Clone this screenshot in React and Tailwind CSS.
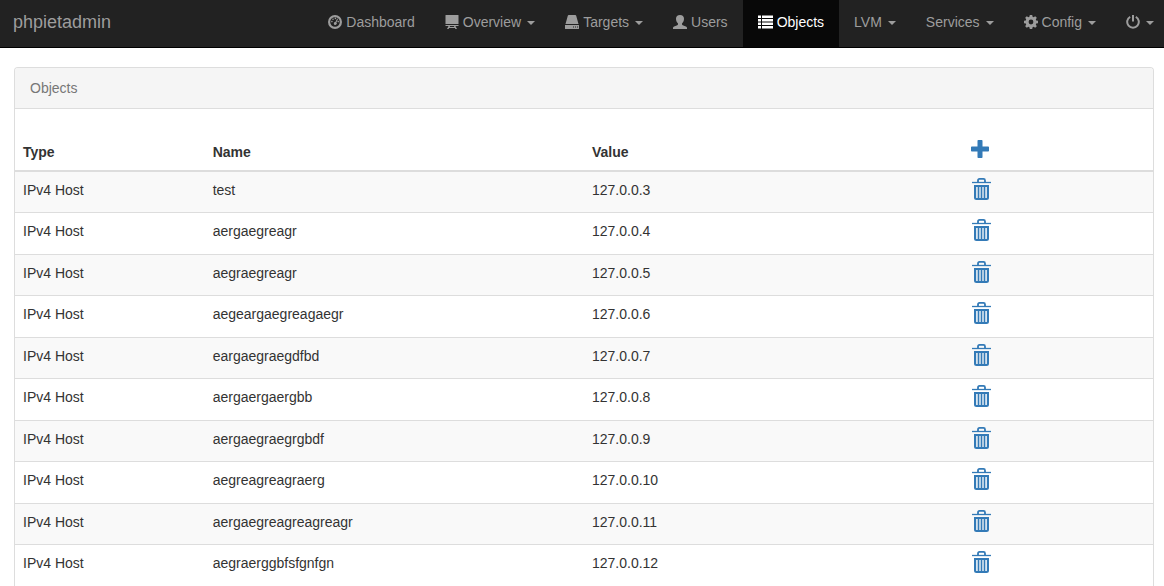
import React from 'react';

function DashboardIcon() {
  return (
    <svg viewBox="0 0 14 14" className="size-[14px] shrink-0" fill="currentColor" aria-hidden="true">
      <circle cx="7" cy="7" r="5.9" fill="none" stroke="currentColor" strokeWidth="2.2" />
      <circle cx="3.9" cy="6.6" r="0.8" />
      <circle cx="5" cy="4.2" r="0.8" />
      <circle cx="7.4" cy="3.4" r="0.8" />
      <circle cx="10.2" cy="6.6" r="0.8" />
      <path d="M9.2 3.4l.8.5-1.6 3.5a1.5 1.5 0 1 1-1-.5z" />
    </svg>
  );
}

function ScreenIcon() {
  return (
    <svg viewBox="0 0 14 14" className="size-[14px] shrink-0" fill="currentColor" aria-hidden="true">
      <path d="M1 0h12q.5 0 .5.5V9H.5V.500Q.5 0 1 0z" />
      <path d="M.5 10h13v1H.5zM3.600 11h1.400l-.3 1h4.600l-.3-1h1.400l1.600 3h-1.600l-.5-1H4.100l-.5 1H2z" />
    </svg>
  );
}

function DriveIcon() {
  return (
    <svg viewBox="0 0 14 14" className="size-[14px] shrink-0" fill="currentColor" aria-hidden="true">
      <path d="M3.800 0h6.400q.8 0 1 .8L13.500 9H.5L2.800.8Q3 0 3.800 0z" />
      <path fillRule="evenodd" d="M0 10h14v3.500q0 .5-.5.5H.5q-.5 0-.5-.5zM8 11.600h1v1H8zM10 11.600h1v1h-1zM12 11.600h1v1h-1z" />
    </svg>
  );
}

function UserIcon() {
  return (
    <svg viewBox="0 0 14 14" className="size-[14px] shrink-0" fill="currentColor" aria-hidden="true">
      <path d="M7 0c2.600 0 4 1.500 4 3.800 0 2-.8 3.700-2 4.700v.8c0 .4.3.7.7.9l3.200 1.300c.7.3 1.100.8 1.100 1.500v1H0v-1c0-.7.4-1.200 1.100-1.500l3.200-1.300c.4-.2.7-.5.7-.9v-.8c-1.200-1-2-2.700-2-4.700C3 1.500 4.400 0 7 0z" />
    </svg>
  );
}

function ListIcon() {
  return (
    <svg viewBox="0 0 15 14" className="h-[14px] w-[15px] shrink-0" fill="currentColor" aria-hidden="true">
      <path d="M0 .5h3v2.500H0zM4 .5h11v2.500H4zM0 4h3v2.500H0zM4 4h11v2.500H4zM0 7.500h3V10H0zM4 7.500h11V10H4zM0 11h3v2.500H0zM4 11h11v2.500H4z" />
    </svg>
  );
}

function GearIcon() {
  return (
    <svg viewBox="0 0 14 14" className="size-[14px] shrink-0" fill="currentColor" aria-hidden="true">
      <path
        fillRule="evenodd"
        d="M5.800 0h2.400l.4 1.800 1 .4 1.600-1 1.600 1.600-1 1.600.4 1 1.800.4v2.400l-1.800.4-.4 1 1 1.600-1.600 1.600-1.600-1-1 .4-.4 1.800H5.800l-.4-1.800-1-.4-1.600 1-1.600-1.600 1-1.600-.4-1L0 8.200V5.800l1.800-.4.4-1-1-1.600 1.600-1.600 1.600 1 1-.4zM7 4.600a2.400 2.400 0 1 0 0 4.800 2.400 2.400 0 0 0 0-4.800z"
      />
    </svg>
  );
}

function PowerIcon() {
  return (
    <svg viewBox="0 0 14 14" className="size-[14px] shrink-0" fill="none" stroke="currentColor" strokeWidth="2" aria-hidden="true">
      <path d="M4.200 1.800a5.800 5.800 0 1 0 5.600 0M7 0v6.500" />
    </svg>
  );
}

function PlusIcon() {
  return (
    <svg viewBox="0 0 18 18" className="size-[18px]" fill="currentColor" aria-hidden="true">
      <path d="M7.300 0h3.400q.8 0 .8.800v5.700h5.700q.8 0 .8.800v3.400q0 .8-.8.800h-5.700v5.700q0 .8-.8.800H7.300q-.8 0-.8-.8v-5.700H.8q-.8 0-.8-.8V7.300q0-.8.8-.8h5.700V.8q0-.8.8-.8z" />
    </svg>
  );
}

function TrashIcon() {
  return (
    <svg viewBox="0 0 20 24" className="h-6 w-5" fill="none" stroke="currentColor" aria-hidden="true">
      <path strokeWidth="1.800" d="M7 5V3.400q0-1.500 1.500-1.500h4q1.500 0 1.500 1.500V5" />
      <path strokeWidth="1.300" d="M1 5.500h19" />
      <path strokeWidth="2" fill="currentColor" fillOpacity="0.180" d="M4 9h13v11.500q0 1.500-1.500 1.500h-10Q4 22 4 20.500z" />
      <path strokeWidth="1.400" d="M7.500 9v12M10.500 9v12M13.500 9v12" />
    </svg>
  );
}

const navItems = [
  { label: 'Dashboard', icon: DashboardIcon },
  { label: 'Overview', icon: ScreenIcon, menu: true },
  { label: 'Targets', icon: DriveIcon, menu: true },
  { label: 'Users', icon: UserIcon },
  { label: 'Objects', icon: ListIcon, active: true },
  { label: 'LVM', menu: true },
  { label: 'Services', menu: true },
  { label: 'Config', icon: GearIcon, menu: true },
];

const objects = [
  ['test', '127.0.0.3'],
  ['aergaegreagr', '127.0.0.4'],
  ['aegraegreagr', '127.0.0.5'],
  ['aegeargaegreagaegr', '127.0.0.6'],
  ['eargaegraegdfbd', '127.0.0.7'],
  ['aergaergaergbb', '127.0.0.8'],
  ['aergaegraegrgbdf', '127.0.0.9'],
  ['aegreagreagraerg', '127.0.0.10'],
  ['aergaegreagreagreagr', '127.0.0.11'],
  ['aegraerggbfsfgnfgn', '127.0.0.12'],
];

function Caret() {
  return (
    <svg viewBox="0 0 8 4" className="ml-1.5 mt-0.5 h-1 w-2 shrink-0" fill="currentColor" aria-hidden="true">
      <path d="M0 0h8L4 4z" />
    </svg>
  );
}

function NavItem({ label, icon: Icon, menu, active }) {
  const className = `flex h-[47px] items-center px-[15px] pb-[3px] ${
    active ? 'bg-[#080808] text-white' : 'text-[#9d9d9d] hover:text-white'
  }`;
  const content = (
    <>
      {Icon && <Icon />}
      <span className={Icon ? 'ml-1' : ''}>{label}</span>
      {menu && <Caret />}
    </>
  );
  return (
    <li>
      {menu ? (
        <button type="button" aria-haspopup="true" className={className}>{content}</button>
      ) : (
        <a href="#" aria-current={active ? 'page' : undefined} className={className}>{content}</a>
      )}
    </li>
  );
}

export default function App() {
  return (
    <div className="bg-white font-['Liberation_Sans',Arial,sans-serif] text-sm text-[#333]">
      <nav className="flex items-center justify-between border-b border-black bg-[#222]">
        <a href="#" className="pb-[3px] pl-[13px] text-lg leading-5 text-[#9d9d9d]">phpietadmin</a>
        <ul className="flex">
          {navItems.map((item) => (
            <NavItem key={item.label} {...item} />
          ))}
          <li>
            <button
              type="button"
              aria-label="Power"
              aria-haspopup="true"
              className="flex h-[47px] items-center pb-[3px] pl-[15px] pr-[10px] text-[#9d9d9d] hover:text-white"
            >
              <PowerIcon />
              <Caret />
            </button>
          </li>
        </ul>
      </nav>

      <main className="pl-3.5 pr-2.5 pt-[19px]">
        <section className="rounded-t border-x border-t border-[#ddd]">
          <h1 className="rounded-t-[3px] border-b border-[#ddd] bg-[#f5f5f5] px-[15px] py-2.5 leading-5 text-[#777]">
            Objects
          </h1>
          <table className="w-full table-fixed border-separate border-spacing-0 text-left leading-5">
            <thead>
              <tr className="h-[63px] *:border-b-2 *:border-[#ddd] *:px-2 *:pb-2 *:align-bottom">
                <th className="w-1/6">Type</th>
                <th className="w-1/3">Name</th>
                <th className="w-1/3">Value</th>
                <th className="w-1/6">
                  <button type="button" aria-label="Add object" className="mb-1 block text-[#337ab7]">
                    <PlusIcon />
                  </button>
                </th>
              </tr>
            </thead>
            <tbody>
              {objects.map(([name, value]) => (
                <tr
                  key={value}
                  className="h-[41px] *:border-b *:border-[#ddd] *:px-2 *:pt-2 *:align-top odd:bg-[#f9f9f9] even:h-[42px] last:h-[41px] last:*:border-b-0"
                >
                  <td>IPv4 Host</td>
                  <td>{name}</td>
                  <td>{value}</td>
                  <td className="pt-[5px]!">
                    <button type="button" aria-label={`Delete ${name}`} className="block text-[#337ab7]">
                      <TrashIcon />
                    </button>
                  </td>
                </tr>
              ))}
            </tbody>
          </table>
        </section>
      </main>
    </div>
  );
}
